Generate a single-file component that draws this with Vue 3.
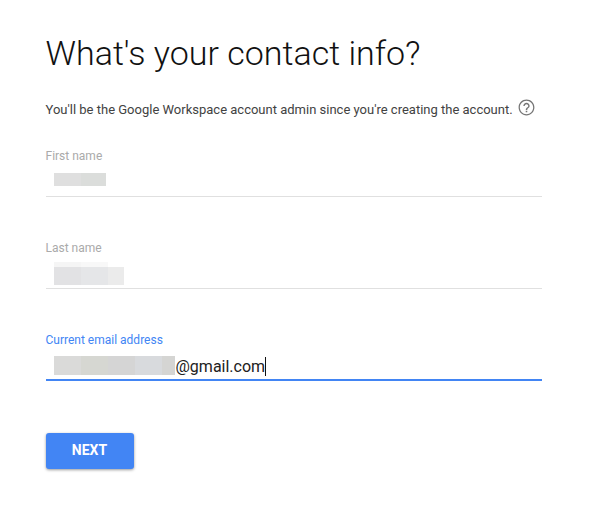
<script setup>
const fields = [
  {
    id: 'first',
    label: 'First name',
    mask: [[{ w: 27, c: '#dfdfdf' }, { w: 25, c: '#dbdddb' }]],
    suffix: '',
  },
  {
    id: 'last',
    label: 'Last name',
    mask: [
      [{ w: 27, c: '#f5f5f5' }, { w: 27, c: '#f8f8f8' }],
      [{ w: 27, c: '#e2e2e4' }, { w: 27, c: '#e5e6e8' }, { w: 16, c: '#ebebeb' }],
    ],
    suffix: '',
  },
  {
    id: 'email',
    label: 'Current email address',
    mask: [[
      { w: 27, c: '#dadad9' }, { w: 27, c: '#d6d7d2' }, { w: 27, c: '#d5d5d5' },
      { w: 27, c: '#d8dadd' }, { w: 13, c: '#d5d5d3' },
    ]],
    suffix: '@gmail.com',
  },
]
</script>

<template>
  <main class="page">
    <h1>What's your contact info?</h1>
    <p class="intro">
      <span class="intro-text">You'll be the Google Workspace account admin since you're creating the account.</span>
      <svg class="help" viewBox="0 0 24 24" width="19" height="19" aria-label="Help">
        <path d="M11 18h2v-2h-2v2zm1-16C6.48 2 2 6.48 2 12s4.48 10 10 10 10-4.48 10-10S17.52 2 12 2zm0 18.4c-4.64 0-8.4-3.76-8.4-8.4s3.76-8.4 8.4-8.4 8.4 3.76 8.4 8.4-3.76 8.4-8.4 8.4zm0-14.4c-2.21 0-4 1.79-4 4h1.8c0-1.21.99-2.2 2.2-2.2s2.2.99 2.2 2.2c0 2-3.1 1.75-3.1 5h1.8c0-2.25 3.1-2.5 3.1-5 0-2.21-1.79-4-4-4z" />
      </svg>
    </p>
    <form class="form" @submit.prevent>
      <div v-for="f in fields" :key="f.id" class="field" :class="f.id">
        <label>{{ f.label }}</label>
        <div class="value">
          <div class="mask">
            <div v-for="(row, r) in f.mask" :key="r" class="mask-row">
              <i v-for="(b, i) in row" :key="i" :style="{ width: b.w + 'px', background: b.c }"></i>
            </div>
          </div>
          <span v-if="f.suffix" class="suffix">{{ f.suffix }}</span>
          <span v-if="f.suffix" class="caret"></span>
        </div>
      </div>
      <button type="submit">NEXT</button>
    </form>
  </main>
</template>

<style>
body {
  background: #fff;
}
</style>

<style scoped>
.page {
  box-sizing: border-box;
  width: 590px;
  height: 510px;
  padding: 33px 48px 0 45.5px;
  font-family: Roboto, "Liberation Sans", sans-serif;
  color: #212121;
}
h1 {
  margin: 0;
  height: 40px;
  line-height: 40px;
  font-size: 34px;
  font-weight: 300;
  color: #111;
  white-space: nowrap;
}
.intro {
  display: flex;
  align-items: flex-start;
  gap: 4px;
  height: 20px;
  margin: 25px 0 0;
  font-size: 13px;
  line-height: 23px;
  color: #424242;
  white-space: nowrap;
}
.help {
  flex: none;
  fill: #757575;
}
.form {
  display: flex;
  flex-direction: column;
  align-items: flex-start;
  margin-top: 30px;
  width: 496px;
}
.field {
  box-sizing: border-box;
  width: 100%;
  height: 49px;
  margin-bottom: 43px;
  border-bottom: 1px solid #e0e0e0;
}
label {
  display: block;
  height: 16px;
  line-height: 16px;
  font-size: 12px;
  color: #aaa;
}
.value {
  display: flex;
  align-items: flex-start;
  padding-left: 8.5px;
}
.mask-row {
  display: flex;
  height: 13px;
}
.mask-row i {
  display: block;
}
.first .mask {
  padding-top: 9px;
}
.last .mask {
  padding-top: 6px;
}
.last .mask-row:first-child {
  height: 5px;
}
.last .mask-row:last-child {
  height: 18px;
}
.email {
  border-bottom: 2px solid #4285f4;
  margin-bottom: 52px;
}
.email label {
  color: #4285f4;
}
.email .mask {
  padding-top: 8px;
}
.email .mask-row {
  height: 19px;
}
.suffix {
  padding-top: 9px;
  padding-left: 0.5px;
  margin-right: -0.5px;
  font-size: 16px;
  line-height: 19px;
}
.caret {
  width: 1px;
  height: 19px;
  margin-top: 9px;
  background: #111;
}
button {
  width: 88px;
  height: 36px;
  padding: 0 0 2px;
  border: 0;
  border-radius: 3px;
  background: #4285f4;
  box-shadow: 0 1px 3px rgba(0, 0, 0, 0.4);
  color: #fff;
  font: 700 14px/34px Roboto, "Liberation Sans", sans-serif;
}
</style>
